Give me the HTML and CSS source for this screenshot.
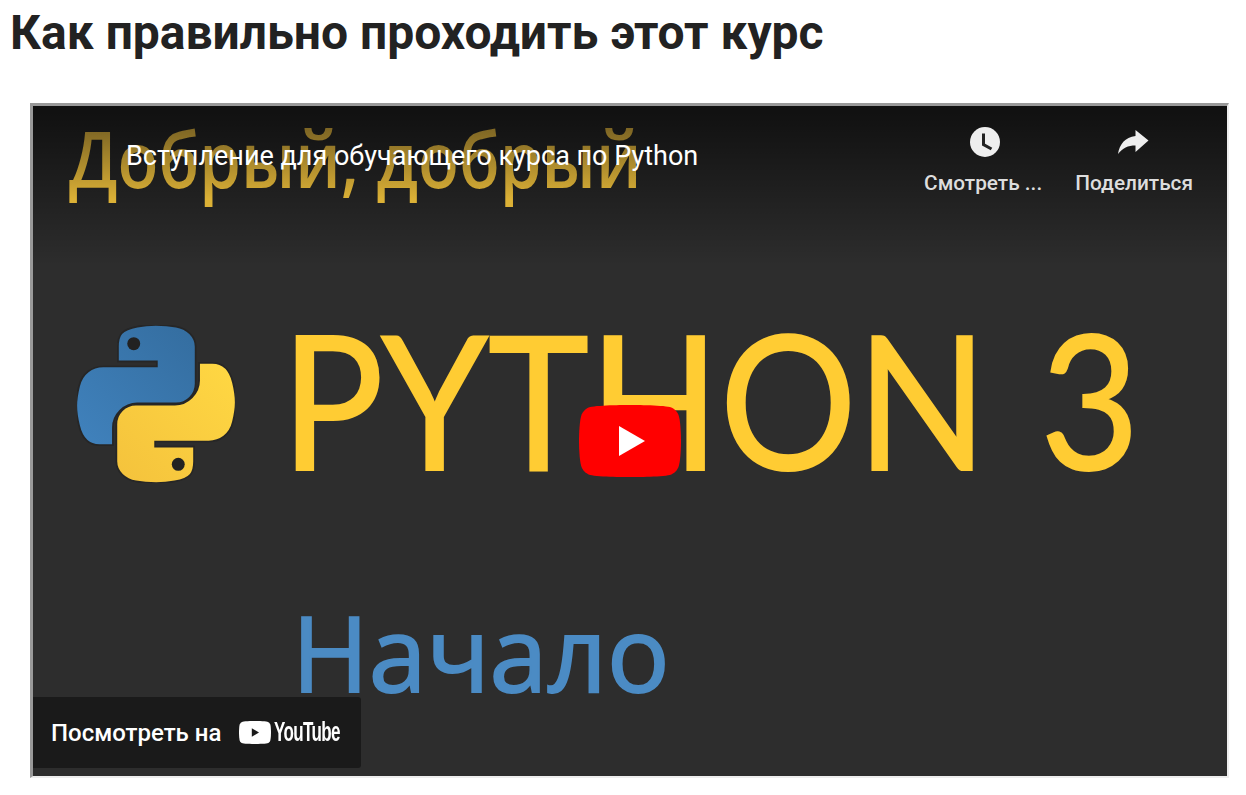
FILE: index.html
```html
<!DOCTYPE html>
<html lang="ru">

<head>
  <meta charset="utf-8">
  <meta name="viewport" content="width=device-width, initial-scale=1.0" />
  <title>Как правильно проходить этот курс</title>

  <link rel="stylesheet" href="styles.css">
</head>

<body>
  <h1 class="pageTitle">Как правильно проходить этот курс</h1>

  <div class="videoFrame">
    <div class="video">
      <!-- thumbnail picture -->
      <span class="thumbText thumbPython">PYTHON 3</span>
      <span class="thumbText thumbStart">Начало</span>
      <svg class="pythonLogo" viewBox="0 0 110 110">
        <defs>
          <linearGradient id="blueFill" x1="0" y1="1" x2="1" y2="0">
            <stop offset="0" stop-color="#4082bd"/>
            <stop offset="1" stop-color="#346d9f"/>
          </linearGradient>
          <linearGradient id="yellowFill" x1="0" y1="1" x2="1" y2="0">
            <stop offset="0" stop-color="#f4c23c"/>
            <stop offset="1" stop-color="#ffd843"/>
          </linearGradient>
        </defs>
        <path class="logoBlue" fill-rule="evenodd" d="M54.9 0C50.3 0 45.9.4 42 1.1 30.5 3.1 28.5 7.3 28.5 15.1V25.4H55.6V28.9H18.3C10.4 28.9 3.5 33.6 1.4 42.6-1.1 52.9-1.2 59.3 1.4 70 3.3 78 7.9 83.7 15.7 83.7H25V71.4C25 62.5 32.7 54.6 41.9 54.6H69C76.5 54.6 82.6 48.4 82.6 40.9V15.1C82.6 7.8 76.4 2.3 69 1.1 64.4.3 59.5 0 54.9 0Z"/>
        <path class="logoYellow" fill-rule="evenodd" d="M55.1 110C59.7 110 64.1 109.6 68 108.9 79.5 106.9 81.5 102.700 81.5 94.9V84.600H54.4V81.100H91.700C99.600 81.100 106.500 76.400 108.600 67.400 111.100 57.100 111.200 50.700 108.600 40 106.700 32 102.100 26.300 94.300 26.300H85V38.600C85 47.500 77.300 55.400 68.100 55.400H41C33.500 55.400 27.400 61.600 27.400 69.100V94.900C27.400 102.200 33.600 107.700 41 108.900 45.600 109.700 50.500 110 55.100 110Z"/>
        <circle class="logoEye" cx="39.500" cy="13" r="4.500"/>
        <circle class="logoEye" cx="70.500" cy="97" r="4.500"/>
      </svg>

      <div class="topShade"></div>
      <!-- its own gradient stands in for the shade, so it goes above it -->
      <span class="thumbText thumbGreeting">Добрый, добрый</span>

      <div class="videoHeader">
        <div class="videoName">Вступление для обучающего курса по Python</div>
        <div class="headerBtn btnLater">
          <svg class="headerIcon" viewBox="0 0 36 36">
            <circle fill="#eee" cx="20" cy="18" r="15"/>
            <path fill="none" stroke="#222" stroke-width="3" d="M18.500 9.500V20.500l8 4.500"/>
          </svg>
          <span>Смотреть ...</span>
        </div>
        <div class="headerBtn btnShare">
          <svg class="headerIcon" viewBox="0 0 36 36">
            <path fill="#eee" d="M19.500 6 32.500 16.500 19.500 28V21.500C12 21.500 6.500 24 2 30 3.500 20.500 9 13 19.500 12Z"/>
          </svg>
          <span>Поделиться</span>
        </div>
      </div>

      <svg class="playBtn" viewBox="0 0 102 72">
        <path fill="#f00" d="M99.900 11.300C98.700 6.900 95.200 3.300 90.800 2.100 82.800 0 51 0 51 0S19.200 0 11.200 2.100C6.800 3.300 3.300 6.900 2.100 11.300 0 19.300 0 36 0 36S0 52.700 2.100 60.700C3.300 65.100 6.800 68.700 11.200 69.900 19.200 72 51 72 51 72S82.800 72 90.800 69.900C95.200 68.700 98.700 65.100 99.900 60.700 102 52.700 102 36 102 36S102 19.300 99.900 11.300Z"/>
        <path fill="#fff" d="M40 21 66 36 40 51Z"/>
      </svg>

      <div class="watchOn">
        <span class="watchLabel">Посмотреть на</span>
        <svg class="ytIcon" viewBox="0 0 32 23">
          <path fill="#fff" d="M31.300 3.600C30.900 2.200 29.800 1.100 28.400.7 25.900 0 16 0 16 0S6.100 0 3.600.7C2.200 1.100 1.100 2.200.7 3.600 0 6.100 0 11.500 0 11.500S0 16.900.7 19.400C1.100 20.800 2.200 21.900 3.600 22.300 6.100 23 16 23 16 23S25.900 23 28.400 22.300C29.800 21.900 30.900 20.800 31.300 19.400 32 16.900 32 11.500 32 11.500S32 6.100 31.300 3.600Z"/>
          <path fill="#1a1a1a" d="M12.800 7.200 20 11.500 12.800 15.800Z"/>
        </svg>
        <span class="ytWord">YouTube</span>
      </div>
    </div>
  </div>
</body>

</html>
```

FILE: styles.css
```css
body {
  margin: 0;
  background-color: #fff;
  font-family: Roboto, "Liberation Sans", sans-serif;
}

.pageTitle {
  margin: 0;
  padding: 7px 0 0 10px;
  height: 95px;
  box-sizing: border-box;
  color: #222;
  font-size: 48px;
  line-height: 52px;
  font-weight: 700;
}

.videoFrame {
  margin: 8px 17px 0 30px;
  height: 675px;
  box-sizing: border-box;
  border-style: solid;
  border-width: 3px 2px 2px 3px;
  border-color: #999 #eee #eee #999;
}

.video {
  position: relative;
  height: 100%;
  overflow: hidden;
  background-color: #2d2d2d;
}

/* thumbnail is a free canvas, so things sit at their own place */
.thumbText {
  position: absolute;
  white-space: nowrap;
  font-family: Lato, "Open Sans", sans-serif;
  transform-origin: 0 0;
}

.thumbGreeting {
  left: 36px;
  top: 2px;
  background: linear-gradient(to bottom, #7d6524 20%, #dcb136 92%);
  -webkit-background-clip: text;
  background-clip: text;
  color: transparent;
  font-family: "Open Sans", sans-serif;
  font-size: 78px;
  font-weight: 600;
  line-height: 100px;
  transform: scaleX(.86);
}

.thumbPython {
  left: 248px;
  top: 182px;
  color: #ffcc33;
  font-size: 186px;
  line-height: 220px;
  word-spacing: 10px;
  -webkit-text-stroke: 2px #ffcc33;
  transform: scaleX(.92);
}

.thumbStart {
  left: 259px;
  top: 481px;
  color: #4b8bc4;
  font-family: "Open Sans", sans-serif;
  font-size: 104px;
  line-height: 130px;
  -webkit-text-stroke: 2px #4b8bc4;
}

.pythonLogo {
  position: absolute;
  left: 44px;
  top: 219px;
  width: 158px;
  height: 158px;
}

.logoBlue {
  fill: url(#blueFill);
  stroke: #262626;
  stroke-width: 1.200;
}

.logoYellow {
  fill: url(#yellowFill);
  stroke: #262626;
  stroke-width: 1.200;
}

.logoEye {
  fill: #222;
}

.topShade {
  position: absolute;
  left: 0;
  right: 0;
  top: 0;
  height: 160px;
  background: linear-gradient(to bottom, rgba(0, 0, 0, .65), rgba(0, 0, 0, 0));
}

.videoHeader {
  position: absolute;
  left: 0;
  right: 0;
  top: 0;
  display: flex;
  align-items: flex-start;
  padding: 18px 34px 0 93px;
  color: #fff;
}

.videoName {
  flex: 1;
  margin-top: 17px;
  font-size: 27px;
  line-height: 30px;
}

.headerBtn {
  display: flex;
  flex-direction: column;
  align-items: center;
  color: #ddd;
  font-size: 20.800px;
  line-height: 24px;
  font-weight: 500;
}

.btnLater {
  margin-right: 33px;
}

.headerIcon {
  width: 36px;
  height: 36px;
  margin-bottom: 11px;
}

.playBtn {
  position: absolute;
  left: 546px;
  top: 299px;
  width: 102px;
  height: 72px;
}

.watchOn {
  position: absolute;
  left: 0;
  bottom: 8px;
  width: 328px;
  height: 71px;
  box-sizing: border-box;
  display: flex;
  align-items: center;
  padding-left: 18px;
  background-color: #1a1a1a;
  border-top-right-radius: 3px;
  border-bottom-right-radius: 3px;
  color: #fff;
}

.watchLabel {
  flex-shrink: 0;
  white-space: nowrap;
  font-size: 24px;
  font-weight: 500;
  margin-right: 18px;
}

.ytIcon {
  flex-shrink: 0;
  width: 32px;
  height: 23px;
  margin-right: 3px;
}

.ytWord {
  flex-shrink: 0;
  font-family: "Liberation Sans", sans-serif;
  font-size: 27px;
  font-weight: 700;
  letter-spacing: -1px;
  transform: scaleX(.63);
  transform-origin: 0 50%;
}
```
